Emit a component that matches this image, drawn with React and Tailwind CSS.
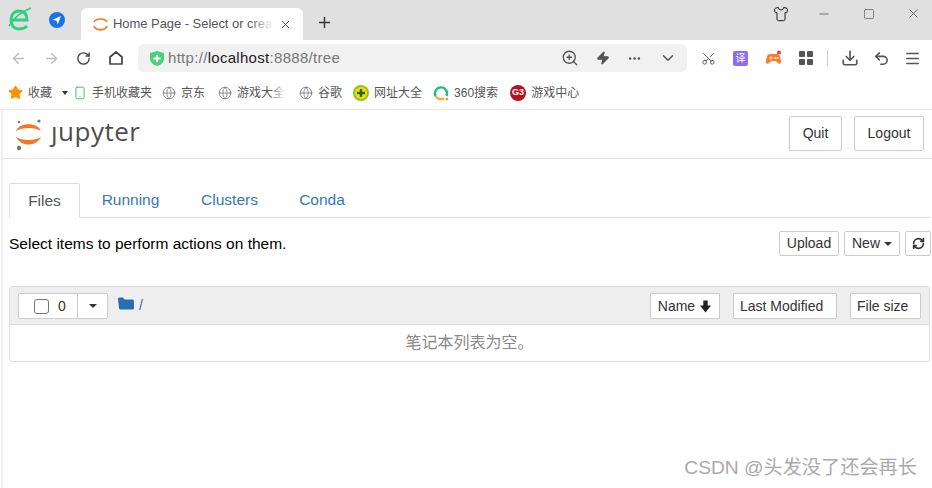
import { ArrowLeft, ArrowRight, RotateCw, RefreshCw, X, Plus, Minus, Square, ZoomIn, Zap, Ellipsis, ChevronDown, Scissors, Download, Undo2, Menu, Globe, Star, Smartphone, Shirt } from "lucide-react"

const sans = "font-['Liberation_Sans','Noto_Sans_CJK_SC',sans-serif]"

/* ================= BROWSER CHROME ================= */

function TabStrip() {
  return (
    <div className="flex h-10 bg-[#e0e0e0]">
      <div className="flex w-[81px] shrink-0 items-center pl-[8px] pb-[1px]">
        <svg width="24" height="27" viewBox="0 0 24 27" fill="none">
          <path d="M4 14h15c0-6-3-9-8-9-5 0-8 4-8 9s3 9 8 9c3 0 6-1 8-3" stroke="#2fd17f" strokeWidth="3" />
          <path d="M1 20C6 12 15 5 23 2" stroke="#2fd17f" strokeWidth="1.5" />
        </svg>
        <svg className="ml-[17px]" width="16" height="16" viewBox="0 0 16 16">
          <circle cx="8" cy="8" r="8" fill="#1a73e8" />
          <path d="M3.500 7.700 12 4 8.700 12.500 7.600 8.800z" fill="#fff" />
        </svg>
      </div>
      <div className="mt-2 flex h-8 w-[222px] items-center rounded-t-md bg-white pl-3">
        <svg width="15" height="16" viewBox="0 0 15 16" fill="none">
          <path d="M1 6C3 2 12 2 14 6" stroke="#f37726" strokeWidth="1.6" />
          <path d="M1 10C3 15 12 15 14 10" stroke="#f37726" strokeWidth="1.8" />
        </svg>
        <div className="relative ml-[5px] w-[160px]">
          <span className={`block text-[13px] tracking-[-0.05px] whitespace-nowrap text-[#555] ${sans}`}>
            Home Page - Select or crea
          </span>
          <div className="absolute inset-y-0 right-0 w-[24px] bg-gradient-to-r from-white/0 to-white" />
        </div>
        <X size={13} strokeWidth={1.8} className="ml-[6px] text-[#444]" />
      </div>
      <div className="ml-[13px] flex items-center pt-[4px]">
        <Plus size={17} strokeWidth={2} className="text-[#333]" />
      </div>
      <div className="ml-auto flex items-start pt-[6px] pr-[11px] text-[#444]">
        <Shirt size={16} strokeWidth={1.5} className="text-[#222]" />
        <Minus size={14} strokeWidth={1.2} className="ml-[28px] mt-[1px]" />
        <Square size={12} strokeWidth={1.2} className="ml-[32px] mt-[2px]" />
        <X size={15} strokeWidth={1.2} className="ml-[31px]" />
      </div>
    </div>
  )
}

function Toolbar() {
  return (
    <div className="flex h-8 items-center bg-white pt-[4px]">
      <div className="flex w-[138px] shrink-0 items-center pl-[10px]">
        <ArrowLeft size={17} strokeWidth={1.8} className="text-[#bbb]" />
        <ArrowRight size={17} strokeWidth={1.8} className="ml-[16px] text-[#bbb]" />
        <RotateCw size={15} strokeWidth={2.2} className="ml-[16px] text-[#444]" />
        <svg className="ml-[18px]" width="14" height="14" viewBox="0 0 14 14" fill="none">
          <path d="M1 6 7 1l6 5v7H1z" stroke="#444" strokeWidth="1.7" strokeLinejoin="round" />
        </svg>
      </div>
      <div className="flex h-7 w-[549px] items-center rounded-md bg-[#f1f1f1] pl-[12px]">
        <svg width="14" height="15" viewBox="0 0 14 15">
          <path d="M7 0l7 2v6c0 3-3 6-7 7-4-1-7-4-7-7V2z" fill="#4cd07d" />
          <path d="M7 4v7M3.500 7.500h7" stroke="#fff" strokeWidth="2" />
        </svg>
        <span className={`ml-[4px] text-[15px] tracking-[0.3px] text-[#777] ${sans}`}>
          http://<span className="text-[#222]">localhost</span>:8888/tree
        </span>
        <div className="ml-auto flex items-center pr-[10px] text-[#555]">
          <ZoomIn size={18} strokeWidth={1.8} />
          <Zap size={14} fill="#555" className="ml-[17px]" />
          <Ellipsis size={15} strokeWidth={2.2} className="ml-[17px]" />
          <ChevronDown size={18} strokeWidth={2} className="ml-[17px]" />
        </div>
      </div>
      <div className="flex flex-1 items-center pl-[14px] text-[#555]">
        <Scissors size={15} strokeWidth={1.5} className="-rotate-90" />
        <div className={`ml-[17px] flex h-[15px] w-[15px] items-center justify-center rounded-[2px] bg-[#8c6cf0] text-[10px] text-white ${sans}`}>译</div>
        <svg className="ml-[17px]" width="17" height="16" viewBox="0 0 17 16">
          <path d="M5 4h7c3 0 4 5 4 8 0 3-3 2-5-1H6c-2 3-5 4-5 1 0-3 1-8 4-8z" fill="#f97c2a" />
          <circle cx="14" cy="2.500" r="2" fill="#ee3b3b" />
          <path d="M4.500 8h3M6 6.500v3" stroke="#fff" />
          <circle cx="10" cy="8" r="1" fill="#fff" />
          <circle cx="12.500" cy="8" r="1" fill="#fff" />
        </svg>
        <div className="ml-[17px] grid grid-cols-2 gap-[2px]">
          <div className="h-[6px] w-[6px] rounded-[1px] bg-[#555]" />
          <div className="h-[6px] w-[6px] rounded-[1px] bg-[#555]" />
          <div className="h-[6px] w-[6px] rounded-[1px] bg-[#555]" />
          <div className="h-[6px] w-[6px] rounded-[1px] bg-[#555]" />
        </div>
        <div className="ml-[14px] h-4 w-px bg-[#ccc]" />
        <Download size={18} strokeWidth={2.2} className="ml-[13px]" />
        <Undo2 size={17} strokeWidth={2.2} className="ml-[14px]" />
        <Menu size={17} strokeWidth={2.2} className="ml-[14px]" />
      </div>
    </div>
  )
}

function Bookmark({ icon, label, className = "", fade = false }) {
  return (
    <div className={`flex items-center ${className}`}>
      {icon}
      <span className="relative ml-[5px] whitespace-nowrap">
        {label}
        {fade && <span className="absolute inset-y-0 right-0 w-[14px] bg-gradient-to-r from-white/0 to-white" />}
      </span>
    </div>
  )
}

function Bookmarks() {
  const globe = <Globe size={14} strokeWidth={1.2} className="text-[#666]" />
  return (
    <div className={`flex h-[38px] items-center border-b border-[#e8e8e8] pt-[4px] pl-2 text-[12px] text-[#555] ${sans}`}>
      <Bookmark icon={<Star size={15} fill="#ff9000" stroke="#ff9000" />} label="收藏" />
      <div className="ml-[10px] h-0 w-0 border-x-[3px] border-t-[4px] border-x-transparent border-t-[#333]" />
      <Bookmark
        className="ml-[5px]"
        icon={<Smartphone size={14} strokeWidth={1.6} className="text-[#3fb96b]" />}
        label="手机收藏夹"
      />
      <Bookmark className="ml-[10px]" icon={globe} label="京东" />
      <Bookmark className="ml-[13px]" icon={globe} label="游戏大全" fade />
      <Bookmark className="ml-[14px]" icon={globe} label="谷歌" />
      <Bookmark
        className="ml-[11px]"
        icon={
          <svg width="16" height="16" viewBox="0 0 16 16">
            <circle cx="8" cy="8" r="8" fill="#8fc31f" />
            <circle cx="8" cy="8" r="6" fill="#ffd800" />
            <path d="M8 4v8M4 8h8" stroke="#1a6b2a" strokeWidth="2.400" />
          </svg>
        }
        label="网址大全"
      />
      <Bookmark
        className="ml-[11px]"
        icon={
          <svg width="16" height="16" viewBox="0 0 16 16" fill="none">
            <path d="M2.600 11A6 6 0 1 1 13.400 11" stroke="#1fbf75" strokeWidth="2.400" />
            <path d="M2.600 11A6 6 0 0 0 11 13.200" stroke="#ffa63d" strokeWidth="2.400" />
            <circle cx="14" cy="14" r="1.300" fill="#ff8a3d" />
          </svg>
        }
        label="360搜索"
      />
      <Bookmark
        className="ml-[12px]"
        icon={
          <div className="flex h-4 w-4 items-center justify-center rounded-full bg-[#b5121b] text-[9px] font-bold text-white">G3</div>
        }
        label="游戏中心"
      />
    </div>
  )
}

/* ================= JUPYTER ================= */

function Btn({ children, className = "" }) {
  return (
    <div className={`flex items-center justify-center border border-[#ccc] bg-white text-[#333] ${className}`}>
      {children}
    </div>
  )
}

function JupyterHeader() {
  return (
    <div className="flex h-[49px] items-start border-b border-[#e7e7e7] pr-[8px] pl-[12px]">
      <svg className="mt-[6px]" width="28" height="36" viewBox="0 0 28 36" fill="none">
        <path d="M1 15C4 6 23 6 26 15C20 11 7 11 1 15z" fill="#f37726" />
        <path d="M1 21C6 31 21 31 26 21C20 25 7 25 1 21z" fill="#f37726" />
        <circle cx="24" cy="5" r="1.600" fill="#767677" />
        <circle cx="4" cy="32" r="2.200" fill="#767677" />
        <circle cx="4" cy="6" r="1.200" fill="#767677" />
      </svg>
      <span className="mt-[3px] ml-[8px] font-['Open_Sans',sans-serif] text-[26px] leading-[36px] font-medium tracking-[0.5px] text-[#4e4e4e]">ȷupyter</span>
      <Btn className={`mt-[6px] ml-auto h-[35px] w-[53px] rounded-[2px] text-[14px] ${sans}`}>Quit</Btn>
      <Btn className={`mt-[6px] ml-[12px] h-[35px] w-[70px] rounded-[2px] text-[14px] ${sans}`}>Logout</Btn>
    </div>
  )
}

function Tabs() {
  return (
    <div className={`mt-6 flex h-[35px] border-b border-[#ddd] text-[15.5px] ${sans}`}>
      <div className="flex h-[35px] w-[71px] items-center justify-center rounded-t-[2px] border border-[#ddd] border-b-white bg-white text-[#555]">Files</div>
      <div className="flex h-[34px] w-[101px] items-center justify-center text-[#337ab7]">Running</div>
      <div className="flex h-[34px] w-[97px] items-center justify-center text-[#337ab7]">Clusters</div>
      <div className="flex h-[34px] w-[88px] items-center justify-center text-[#337ab7]">Conda</div>
    </div>
  )
}

function ActionRow() {
  return (
    <div className={`mt-[13px] -mr-px flex items-start ${sans}`}>
      <span className="mt-px text-[15.5px] leading-[24px] text-black">Select items to perform actions on them.</span>
      <Btn className="ml-auto h-[25px] w-[60px] rounded-[2px] text-[14px]">Upload</Btn>
      <Btn className="ml-[5px] h-[25px] w-[56px] gap-[4px] rounded-[2px] text-[14px]">
        New
        <span className="h-0 w-0 border-x-[4px] border-t-[4px] border-x-transparent border-t-[#333]" />
      </Btn>
      <Btn className="ml-[5px] h-[25px] w-[26px] rounded-[2px]">
        <RefreshCw size={13} strokeWidth={3} />
      </Btn>
    </div>
  )
}

function FileList() {
  return (
    <div className={`mt-[30px] rounded-[3px] border border-[#ddd] ${sans}`}>
      <div className="flex h-[38px] items-start border-b border-[#ddd] bg-[#eee] pt-[6px] pr-[8px] pl-[8px] text-[14px] text-[#333]">
        <div className="flex h-[26px] w-[90px] rounded-[2px] border border-[#ccc] bg-white">
          <div className="flex w-[59px] items-center border-r border-[#ccc] pl-[15px]">
            <div className="h-[15px] w-[15px] rounded-[3px] border border-[#767676] bg-white" />
            <span className="ml-[9px]">0</span>
          </div>
          <div className="flex flex-1 items-center justify-center">
            <span className="h-0 w-0 border-x-[4px] border-t-[4px] border-x-transparent border-t-[#333]" />
          </div>
        </div>
        <svg className="mt-[4px] ml-[10px]" width="16" height="13" viewBox="0 0 16 13">
          <path d="M0 2a1.500 1.500 0 0 1 1.500-1.500h3.500l1.500 2h8a1.500 1.500 0 0 1 1.500 1.500v7a1.500 1.500 0 0 1-1.500 1.500h-12a1.500 1.500 0 0 1-1.500-1.500z" fill="#2a6ead" />
        </svg>
        <span className="ml-[5px] leading-[24px] text-[#2a6ead]">/</span>
        <Btn className="ml-auto h-[26px] w-[70px] gap-[4px] rounded-[1px]">
          Name
          <ArrowDown />
        </Btn>
        <Btn className="ml-[13px] h-[26px] w-[104px] justify-start rounded-[1px] pl-[6px]">Last Modified</Btn>
        <Btn className="ml-[13px] h-[26px] w-[71px] justify-start rounded-[1px] pl-[6px]">File size</Btn>
      </div>
      <div className="flex h-[36px] items-center justify-center text-[16px] text-[#888]">笔记本列表为空。</div>
    </div>
  )
}

function ArrowDown() {
  return (
    <svg width="13" height="13" viewBox="0 0 13 13">
      <path d="M4.300 0.500h4.400v5h3.300L6.500 12.500 1 5.500h3.300z" fill="#222" />
    </svg>
  )
}

/* ================= PAGE ================= */

export default function App() {
  return (
    <div className="relative h-[488px] w-[932px] overflow-hidden bg-white">
      <TabStrip />
      <Toolbar />
      <Bookmarks />
      <div className="ml-[1px] h-[378px] border-l-2 border-[#eee]">
        <JupyterHeader />
        <div className="pr-[2px] pl-[6px]">
          <Tabs />
          <ActionRow />
          <FileList />
        </div>
      </div>
      <div className={`absolute right-[15px] bottom-[5px] text-[19.2px] text-[#aaa] ${sans}`}>CSDN @头发没了还会再长</div>
    </div>
  )
}
